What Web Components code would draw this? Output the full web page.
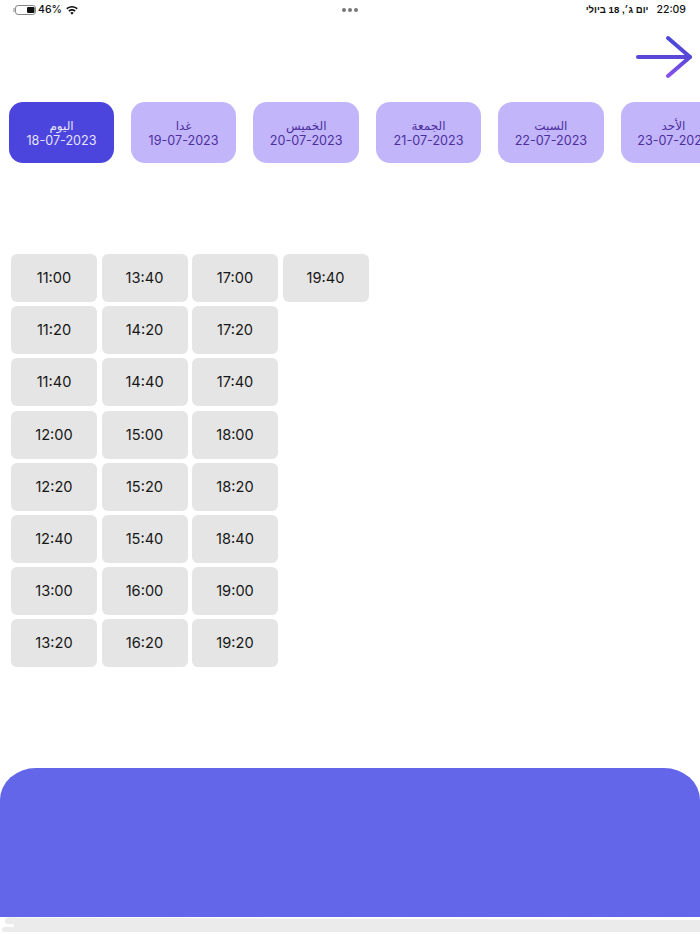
<!DOCTYPE html>
<html lang="ar">
<head>
<meta charset="utf-8">
<title>Booking</title>
<style>
  html, body { margin: 0; background: #fff; }
  body { width: 700px; height: 934px; overflow: hidden; font-family: Inter, "DejaVu Sans", sans-serif; }
</style>
</head>
<body>
<booking-page></booking-page>
<script>
// Status bar across the top
class StatusBar extends HTMLElement {
  constructor() {
    super();
    this.attachShadow({ mode: 'open' }).innerHTML = `
      <style>
        :host { display: grid; grid-template-columns: 1fr auto 1fr; align-items: center; height: 20px; padding: 0 14px 0 13px; font: 500 10.5px/20px Inter, "Liberation Sans", sans-serif; color: #111; }
        .left { display: flex; align-items: center; gap: 2px; }
        .right { display: flex; justify-content: flex-end; gap: 8px; }
        .dots { display: flex; gap: 2px; }
        .dots i { width: 4px; height: 4px; border-radius: 50%; background: #777; }
        .he { font: 700 9.6px/20px "Liberation Sans", sans-serif; }
      </style>
      <div class="left">
        <svg width="23" height="10" viewBox="0 0 23 10">
          <path d="M1 3.4v3.2" stroke="#999" stroke-width="1.2" stroke-linecap="round"/>
          <rect x="2.5" y=".5" width="20" height="9" rx="2.6" fill="#fff" stroke="#888"/>
          <rect x="14" y="2" width="7.5" height="6" rx="1.2" fill="#111"/>
        </svg>
        <span>46%</span>
        <svg style="margin-left:2px" width="12" height="9" viewBox="0 0 13 10" fill="#111">
          <path d="M6.5 0C4 0 1.8 1 .2 2.6l1.2 1.3C2.7 2.6 4.5 1.8 6.5 1.8s3.8.8 5.1 2.1l1.2-1.3C11.2 1 9 0 6.5 0z"/>
          <path d="M6.5 3.4c-1.6 0-3 .6-4 1.7l1.2 1.3c.7-.8 1.7-1.2 2.8-1.2s2.1.4 2.8 1.2l1.2-1.3c-1-1.1-2.4-1.7-4-1.7z"/>
          <path d="M6.5 6.8c-.8 0-1.4.3-1.9.8l1.9 2.2 1.9-2.2c-.5-.5-1.1-.8-1.9-.8z"/>
        </svg>
      </div>
      <div class="dots"><i></i><i></i><i></i></div>
      <div class="right"><span class="he" dir="rtl">יום ג׳, 18 ביולי</span><span>22:09</span></div>
    `;
  }
}

// Back arrow, stroke has a slight blue to violet fade
class BackArrow extends HTMLElement {
  constructor() {
    super();
    this.attachShadow({ mode: 'open' }).innerHTML = `
      <style>
        :host { display: flex; justify-content: flex-end; padding: 14px 6px 0 0; height: 46px; }
        svg { display: block; }
      </style>
      <svg width="60" height="46" viewBox="0 0 60 46" fill="none" stroke-width="4" stroke-linecap="round" stroke-linejoin="round">
        <defs>
          <linearGradient id="g" gradientUnits="userSpaceOnUse" x1="0" y1="4" x2="0" y2="43">
            <stop offset="0" stop-color="#4a48d8"/><stop offset=".55" stop-color="#5b48d8"/><stop offset="1" stop-color="#8a50ee"/>
          </linearGradient>
        </defs>
        <path d="M4 23h52" stroke="#5a48d6"/>
        <path d="M34 4l22 19-22 19" stroke="url(#g)"/>
      </svg>
    `;
  }
}

class DayCard extends HTMLElement {
  constructor() {
    super();
    this.attachShadow({ mode: 'open' }).innerHTML = `
      <style>
        :host { display: flex; flex: none; flex-direction: column; align-items: center; justify-content: center; box-sizing: border-box; height: 61px; padding-top: 2px; border-radius: 14px; background: #c2b5fa; color: #4c2f9e; font: 400 12.6px/14px Inter, "DejaVu Sans", sans-serif; white-space: nowrap; overflow: hidden; }
        :host([active]) { background: #4c45dd; color: #e6e3fb; }
        .name { font-size: 12px; font-family: "DejaVu Sans", sans-serif; }
        .date { margin-top: 1px; }
      </style>
      <span class="name" dir="rtl"><slot name="name"></slot></span>
      <span class="date"><slot></slot></span>
    `;
  }
}

class TimeSlot extends HTMLElement {
  constructor() {
    super();
    this.attachShadow({ mode: 'open' }).innerHTML = `
      <style>
        :host { display: flex; align-items: center; justify-content: center; height: 48px; border-radius: 6px; background: #e5e5e5; color: #171717; font: 400 14.6px Inter, sans-serif; }
      </style>
      <slot></slot>
    `;
  }
}

class BookingPage extends HTMLElement {
  constructor() {
    super();
    const days = [
      ['اليوم', '18-07-2023', 105], ['غدا', '19-07-2023', 105], ['الخميس', '20-07-2023', 106],
      ['الجمعة', '21-07-2023', 104.5], ['السبت', '22-07-2023', 106], ['الأحد', '23-07-2023', 105],
    ];
    const times = ['11:00','11:20','11:40','12:00','12:20','12:40','13:00','13:20',
      '13:40','14:20','14:40','15:00','15:20','15:40','16:00','16:20',
      '17:00','17:20','17:40','18:00','18:20','18:40','19:00','19:20','19:40'];
    this.attachShadow({ mode: 'open' }).innerHTML = `
      <style>
        :host { display: flex; flex-direction: column; height: 934px; overflow: hidden; }
        .days { display: flex; gap: 17.1px; padding: 22px 0 0 9px; overflow: hidden; }
        .times { display: grid; grid-template-rows: repeat(8, 48px); grid-auto-columns: 86px; grid-auto-flow: column; gap: 4.2px 4.5px; padding: 91px 0 0 11px; }
        .panel { margin-top: 100.6px; height: 149px; flex: none; border-radius: 36px 36px 0 0 / 32px 32px 0 0; background: #6366e9; }
        .home { display: block; flex: none; }
      </style>
      <status-bar></status-bar>
      <back-arrow></back-arrow>
      <div class="days">
        ${days.map((d, i) => `<day-card ${i === 0 ? 'active' : ''} style="width:${d[2]}px"><span slot="name">${d[0]}</span>${d[1]}</day-card>`).join('')}
      </div>
      <div class="times">
        ${times.map(t => `<time-slot>${t}</time-slot>`).join('')}
      </div>
      <div class="panel"></div>
      <svg class="home" width="700" height="17" viewBox="0 0 700 17">
        <path d="M7 .5L700 3v12H5Q2 15 2 12.5T5 10h8Q14 10 14 8.5T12 7H8Q5 7 5 4T7 .5z" fill="#ebebeb"/>
      </svg>
    `;
  }
}

customElements.define('status-bar', StatusBar);
customElements.define('back-arrow', BackArrow);
customElements.define('day-card', DayCard);
customElements.define('time-slot', TimeSlot);
customElements.define('booking-page', BookingPage);
</script>
</body>
</html>
